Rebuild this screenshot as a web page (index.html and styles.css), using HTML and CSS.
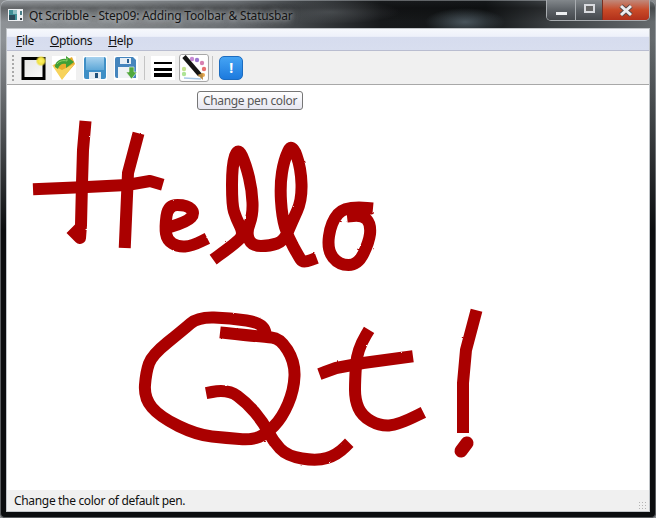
FILE: index.html
```html
<!DOCTYPE html>
<html lang="en">
<head>
    <meta charset="UTF-8">
    <title>Qt Scribble - Step09: Adding Toolbar &amp; Statusbar</title>
    <link rel="stylesheet" href="styles.css">
</head>
<body>
<div class="window">
    <div class="titlebar">
        <svg class="app-icon" width="16" height="16" viewBox="0 0 16 16">
            <rect x="0" y="2" width="15" height="12" fill="#eef1f4"/>
            <rect x="1" y="3" width="8" height="10" fill="#3f8f96"/>
            <rect x="1" y="8" width="6" height="5" fill="#2a4a58"/>
            <rect x="5" y="3" width="4" height="4" fill="#8fc0c4"/>
            <rect x="12" y="4" width="2" height="4" fill="#4a7f8a"/>
            <rect x="12" y="11" width="2" height="2" fill="#39424a"/>
        </svg>
        <span class="title">Qt Scribble - Step09: Adding Toolbar &amp; Statusbar</span>
        <div class="caption-buttons">
            <div class="cap cap-min"><span class="min-glyph"></span></div>
            <div class="cap cap-max"><span class="max-glyph"></span></div>
            <div class="cap cap-close">
                <svg width="18" height="13" viewBox="0 0 18 13">
                    <path d="M4 2 L14 11 M14 2 L4 11" stroke="#5a4a4a" stroke-width="5" fill="none"/>
                    <path d="M4 2 L14 11 M14 2 L4 11" stroke="#ecedf0" stroke-width="3" fill="none"/>
                </svg>
            </div>
        </div>
    </div>

    <div class="client">
        <div class="menubar">
            <span class="menu"><u>F</u>ile</span>
            <span class="menu"><u>O</u>ptions</span>
            <span class="menu"><u>H</u>elp</span>
        </div>

        <div class="toolbar">
            <div class="grip"></div>
            <div class="tool">
                <svg width="26" height="24" viewBox="0 0 26 24">
                    <defs>
                        <linearGradient id="paper" x1="0" y1="0" x2="1" y2="1">
                            <stop offset="0" stop-color="#e4e4e2"/>
                            <stop offset="1" stop-color="#fafafa"/>
                        </linearGradient>
                        <radialGradient id="star">
                            <stop offset="0" stop-color="#fff46a"/>
                            <stop offset=".6" stop-color="#f0e040"/>
                            <stop offset="1" stop-color="#f0e040" stop-opacity="0"/>
                        </radialGradient>
                    </defs>
                    <rect x="3" y="2.5" width="21" height="20" fill="url(#paper)" stroke="#000" stroke-width="3"/>
                    <circle cx="21" cy="5" r="5.5" fill="url(#star)"/>
                </svg>
            </div>
            <div class="tool">
                <svg class="white" width="24" height="24" viewBox="0 0 24 24">
                    <path d="M1 9 L6 7 L16 3 L20 1 L23 8 L10 23 Z" fill="#e6ac2c"/>
                    <path d="M0 9 L10 14 L22 8 L10 24 Z" fill="#f7d35c"/>
                    <path d="M3 11 C3 6 8 2 14 3 L14 0 L22 6 L14 12 L14 8 C10 7 7 9 6 13 Z" fill="#3e9f35"/>
                    <path d="M5 8 C7 5 11 4 15 5 L15 2" stroke="#8fd26a" fill="none"/>
                </svg>
            </div>
            <div class="tool">
                <svg class="white" width="24" height="24" viewBox="0 0 24 24">
                    <defs>
                        <linearGradient id="disk" x1="0" y1="0" x2="0" y2="1">
                            <stop offset="0" stop-color="#a8d2ee"/>
                            <stop offset="1" stop-color="#5fa8d8"/>
                        </linearGradient>
                    </defs>
                    <rect x="1" y="1" width="22" height="22" rx="2" fill="#3f8fc6"/>
                    <rect x="3" y="1" width="18" height="13" fill="url(#disk)"/>
                    <rect x="6" y="16" width="12" height="7" fill="#e4ecf2"/>
                    <rect x="12" y="17" width="3" height="5" fill="#1f4f78"/>
                </svg>
            </div>
            <div class="tool">
                <svg class="white" width="24" height="24" viewBox="0 0 24 24">
                    <path d="M1 3 Q1 1 3 1 L19 1 L22 4 L22 22 L3 22 Q1 22 1 20 Z" fill="#4585bd"/>
                    <rect x="6" y="2" width="11" height="6" fill="#e6eef5"/>
                    <rect x="13" y="3" width="2" height="4" fill="#2a5f90"/>
                    <rect x="4" y="11" width="12" height="11" fill="#eef2f5"/>
                    <path d="M15 11 L20 11 L20 16 L23 16 L17.5 23 L12 16 L15 16 Z" fill="#4fa83d" stroke="#f2f2f2" stroke-width=".6"/>
                </svg>
            </div>
            <div class="sep"></div>
            <div class="tool">
                <svg class="white" width="24" height="24" viewBox="0 0 24 24">
                    <rect x="3" y="6" width="18" height="2" fill="#000"/>
                    <rect x="3" y="12" width="18" height="3" fill="#000"/>
                    <rect x="3" y="17" width="18" height="4" fill="#000"/>
                </svg>
            </div>
            <div class="tool tool-hover">
                <svg class="white" width="26" height="25" viewBox="0 0 26 25">
                    <circle cx="11" cy="4" r="2.2" fill="#c88ad4"/>
                    <circle cx="16" cy="5" r="2.2" fill="#9a78d0"/>
                    <circle cx="21" cy="8" r="2.2" fill="#d880b0"/>
                    <circle cx="23" cy="14" r="2.2" fill="#e87070"/>
                    <circle cx="22" cy="20" r="2" fill="#e8a850"/>
                    <circle cx="3" cy="14" r="2.2" fill="#c4e290"/>
                    <circle cx="3" cy="19" r="2.2" fill="#aee496"/>
                    <path d="M3 23 L20 24" stroke="#a8c8e8" stroke-width="1.5"/>
                    <path d="M3 1.500 L19 20" stroke="#151515" stroke-width="4.500"/>
                    <path d="M16.500 20 L21.500 18 L22 25 Z" fill="#b88a40"/>
                </svg>
            </div>
            <div class="sep"></div>
            <div class="tool">
                <div class="info-icon">!</div>
            </div>
        </div>

        <div class="canvas">
            <svg class="scribble" width="642" height="405" viewBox="7 85 642 405">
                <defs>
                    <filter id="rough" filterUnits="userSpaceOnUse" x="7" y="85" width="642" height="405">
                        <feTurbulence type="fractalNoise" baseFrequency="0.25" numOctaves="1" seed="4"/>
                        <feDisplacementMap in="SourceGraphic" scale="2"/>
                    </filter>
                </defs>
                <g filter="url(#rough)">
                    <path d="M85,127 L83,150 L82,183 L81,225 L80,238 L75,233"/>
                    <path d="M137,139 L128,173 L125,242"/>
                    <path d="M39,189 L87,187 L127,185 L150,181 L157,183"/>
                    <path d="M170,227 Q187,222 191,217.5 T191,209 T177.5,205 T166.5,216 T166,233.5 T172.5,243.5 T185,246.5 Q192,246 202,241"/>
                    <path d="M218,256 Q236,243 240,238.5 T240,226 T234,211.5 T232,185 T235,156 T242,156 T249,177.5 T252.5,202.5 T249.5,224 T249,239.5 T261,246 T277,243.5 T288,231.5 T297,211 T301.5,184 T296.5,155.5 T288,151.5 T282,172.5 T281,201 T285,227 T293.5,247 T301,260 Q303,263 311,260"/>
                    <path d="M367,208 Q345,206 338,214 T329,236 T333,257.5 T348.5,265 T363.5,253.5 T370,234 Q372,214 353,216"/>
                    <path d="M226,333 Q263,337 271.5,337.5 T287.5,350 T294.5,376 T288,404 T274,426 T259,437 T239.5,439 T212,436.5 T178.5,426 T152,407.5 T145,385 T149,363.5 T167.5,342.5 T190.5,323.5 T214,317.5 T246.5,320.5 Q263,323 265,331"/>
                    <path d="M212,392 Q228,389 237.5,396 T255,412.5 T268,431.5 T280,448.5 T302,458.5 T327,458 Q337,455 345,447"/>
                    <path d="M325,372 L336,368 L363,363 L407,357"/>
                    <path d="M366,335 Q357,350 356,365 T355,390 T358.5,408 T371,421 T389,425.5 Q398,425 418,415"/>
                    <path d="M475,316 L466,350 L463,383 L463,427"/>
                    <path class="dot" d="M467,443 L461,451"/>
                </g>
            </svg>
        </div>

        <div class="statusbar">
            <span>Change the color of default pen.</span>
            <div class="size-grip"></div>
        </div>
    </div>

    <div class="tooltip">Change pen color</div>
</div>
</body>
</html>
```

FILE: styles.css
```css
* {
    margin: 0;
    padding: 0;
    box-sizing: border-box;
}
body {
    width: 656px;
    height: 518px;
    overflow: hidden;
    font-family: "Noto Sans", "Open Sans", sans-serif;
    font-size: 12px;
    letter-spacing: -.33px;
    background: #8a8d90;
}
.window {
    position: relative;
    width: 656px;
    height: 518px;
    padding: 0 7px 7px 7px;
    display: flex;
    flex-direction: column;
    border-radius: 7px 7px 5px 5px;
    box-shadow: inset 0 0 0 1px rgba(235, 240, 245, .35);
    background:
        linear-gradient(transparent 40px, #0b0d0f 230px),
        radial-gradient(ellipse 40px 14px at 465px 22px, rgba(95, 110, 120, .7), transparent),
        radial-gradient(ellipse 70px 12px at 330px 12px, rgba(110, 115, 120, .45), transparent),
        linear-gradient(transparent 2px, rgba(0, 0, 0, .3) 8px, transparent 22px),
        linear-gradient(90deg, #8e9296 0, #85898c 18%, #6a6e72 36%, #3f4346 46%, #17191b 58%, #141719 74%, #3b3f42 84%, #666b6e 100%);
}
.titlebar {
    height: 29px;
    flex: none;
    display: flex;
    align-items: center;
    padding: 1px 0 0 1px;
}
.app-icon {
    margin-right: 5px;
}
.title {
    letter-spacing: -.18px;
    color: #141414;
    text-shadow: 0 0 5px rgba(230, 235, 240, .7), 0 0 9px rgba(230, 235, 240, .5);
}
.caption-buttons {
    position: absolute;
    top: 0;
    right: 7px;
    display: flex;
    height: 20px;
    box-shadow: 0 0 0 1px #a8acb0;
    border-radius: 0 0 4px 4px;
    overflow: hidden;
}
.cap {
    display: flex;
    align-items: center;
    justify-content: center;
    height: 100%;
}
.cap-min {
    width: 29px;
    background: linear-gradient(#82878b, #5c6166 50%, #44484c);
    border-right: 1px solid #a8acb0;
}
.cap-max {
    width: 27px;
    background: linear-gradient(#82878b, #5c6166 50%, #44484c);
    border-right: 1px solid #7a3020;
}
.cap-close {
    width: 46px;
    background: linear-gradient(#c08a7c, #c84a28 50%, #b2301a);
}
.min-glyph {
    width: 11px;
    height: 3px;
    margin-top: 6px;
    background: #eceef0;
}
.max-glyph {
    width: 11px;
    height: 9px;
    margin-bottom: 3px;
    border: 2px solid #d8dade;
    background: #666;
}
.client {
    flex: 1;
    display: flex;
    flex-direction: column;
    background: #f0f0f0;
    outline: 1px solid #c0c4c8;
}
.menubar {
    height: 22px;
    flex: none;
    display: flex;
    align-items: center;
    gap: 16px;
    padding: 2px 0 0 9px;
    color: #111;
    background: linear-gradient(#f6f8fc 0, #eef1fa 35%, #d6dcee 40%, #d8deef 100%);
    border-bottom: 1px solid #b9bdd0;
}
.toolbar {
    height: 34px;
    flex: none;
    display: flex;
    align-items: center;
    gap: 1px;
    padding-left: 5px;
    background: #f0f0f0;
    border-bottom: 1px solid #a8a8a8;
}
.grip {
    width: 2px;
    height: 26px;
    margin-right: 3px;
    background: repeating-linear-gradient(#a9a9a9 0 2px, transparent 2px 4px);
}
.tool {
    width: 30px;
    height: 28px;
    display: flex;
    align-items: center;
    justify-content: center;
    border: 1px solid transparent;
    border-radius: 3px;
}
.white {
    background: #fff;
}
.tool-hover {
    border-color: #a8a8a8;
    background: #fafafa;
}
.sep {
    width: 1px;
    height: 24px;
    margin: 0 2px;
    background: #c4c4c4;
}
.info-icon {
    width: 24px;
    height: 24px;
    border-radius: 5px;
    background: linear-gradient(#45a4f4, #1c7ade);
    border: 1px solid #1c6cc0;
    color: #fff;
    font-weight: bold;
    font-size: 14px;
    line-height: 22px;
    text-align: center;
}
.canvas {
    flex: 1;
    background: #fff;
    min-height: 0;
}
.scribble {
    display: block;
}
.scribble path {
    fill: none;
    stroke: #aa0000;
    stroke-width: 12;
    stroke-linecap: square;
    stroke-linejoin: round;
}
.scribble .dot {
    stroke-width: 13;
    stroke-linecap: round;
}
.statusbar {
    height: 21px;
    flex: none;
    display: flex;
    align-items: center;
    justify-content: space-between;
    padding: 0 2px 0 7px;
    color: #111;
    background: #f0f0f0;
}
.size-grip {
    width: 9px;
    height: 9px;
    margin-top: 10px;
    background: radial-gradient(circle, #b4b4b4 1px, transparent 1px) 0 0 / 3px 3px;
}
.tooltip {
    position: absolute;
    left: 197px;
    top: 91px;
    width: 106px;
    height: 19px;
    line-height: 17px;
    text-align: center;
    color: #575757;
    background: linear-gradient(#fff, #e6e6f0);
    border: 1px solid #767676;
    border-radius: 3px;
}
```
